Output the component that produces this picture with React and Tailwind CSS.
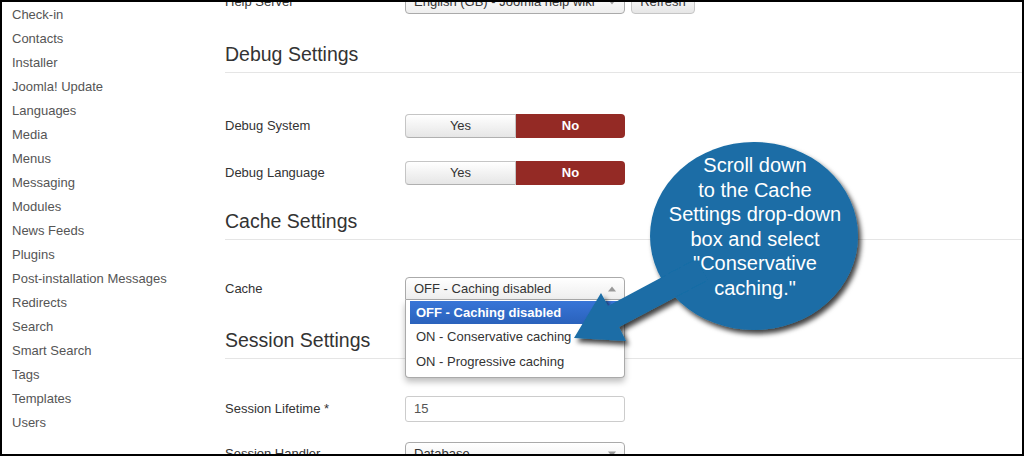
const sidebarItems = [
  'Check-in',
  'Contacts',
  'Installer',
  'Joomla! Update',
  'Languages',
  'Media',
  'Menus',
  'Messaging',
  'Modules',
  'News Feeds',
  'Plugins',
  'Post-installation Messages',
  'Redirects',
  'Search',
  'Smart Search',
  'Tags',
  'Templates',
  'Users',
];

const font = { fontFamily: '"Liberation Sans", Arial, sans-serif' };

const Caret = ({ up = false }) => (
  <svg width="8" height="6" viewBox="0 0 8 6" className="shrink-0">
    <path d={up ? 'M0 5.5 L4 0.5 L8 5.5 Z' : 'M0 0.5 L4 5.5 L8 0.5 Z'} fill="#999" />
  </svg>
);

const Heading = ({ children, className = '' }) => (
  <div className={`shrink-0 flex items-end pb-[6px] border-b border-[#e5e5e5] ${className}`}>
    <h2 className="text-[19.5px] leading-[24px] text-[#333]">{children}</h2>
  </div>
);

const Row = ({ label, children, className = '' }) => (
  <div className={`shrink-0 flex items-center ${className}`}>
    <div className="w-[180px] shrink-0 text-[13px] text-[#333]">{label}</div>
    {children}
  </div>
);

const Toggle = () => (
  <div className="flex w-[220px] h-[24px] text-[13px]">
    <div className="flex-1 flex items-center justify-center rounded-l-[4px] border border-[#c5c5c5] border-b-[#b0b0b0] bg-gradient-to-b from-white to-[#e6e6e6] text-[#333]">
      Yes
    </div>
    <div className="flex-1 flex items-center justify-center rounded-r-[4px] bg-[#942a25] text-white font-bold">
      No
    </div>
  </div>
);

const SelectBox = ({ value, up = false, className = '' }) => (
  <div
    className={`w-[220px] flex items-center justify-between pl-[8px] pr-[8px] border border-[#aaa] bg-gradient-to-b from-white to-[#eee] text-[13px] text-[#333] ${className}`}
  >
    <span>{value}</span>
    <Caret up={up} />
  </div>
);

export default function App() {
  return (
    <div className="relative w-[1024px] h-[456px] bg-white overflow-hidden" style={font}>
      <div className="flex h-full border-2 border-black overflow-hidden">
        {/* Sidebar */}
        <nav className="w-[223px] shrink-0 pt-[1px] pl-[10px]">
          {sidebarItems.map((item) => (
            <div key={item} className="h-[24px] flex items-center text-[13px] text-[#555]">
              {item}
            </div>
          ))}
        </nav>

        {/* Main settings */}
        <main className="flex-1 flex flex-col">
          <Row label="Help Server" className="mt-[-12px] h-[24px]">
            <SelectBox value="English (GB) - Joomla help wiki" className="h-[24px] rounded-[4px] w-[218px]" />
            <div className="ml-[6px] h-[23px] w-[64px] flex items-center justify-center rounded-[4px] border border-[#c5c5c5] bg-gradient-to-b from-white to-[#e6e6e6] text-[13px] text-[#333]">
              Refresh
            </div>
          </Row>

          <Heading className="h-[59px]">Debug Settings</Heading>

          <Row label="Debug System" className="mt-[41px] h-[24px]">
            <Toggle />
          </Row>
          <Row label="Debug Language" className="mt-[23px] h-[24px]">
            <Toggle />
          </Row>

          <Heading className="h-[55px]">Cache Settings</Heading>

          <Row label="Cache" className="mt-[37px] h-[23px]">
            <div className="relative">
              <SelectBox value="OFF - Caching disabled" up className="h-[23px] rounded-t-[4px]" />
              <div className="absolute left-0 top-[23px] z-10 w-[220px] h-[78px] bg-white border border-[#aaa] border-t-0 rounded-b-[4px] shadow-[0_4px_6px_rgba(0,0,0,0.25)] pl-[4px] pr-[2px] pt-[1px] text-[13px] text-[#333]">
                <div className="h-[23px] flex items-center pl-[6px] bg-gradient-to-b from-[#3875d7] to-[#2a62bc] text-white font-bold">
                  OFF - Caching disabled
                </div>
                <div className="h-[25px] flex items-center pl-[6px]">ON - Conservative caching</div>
                <div className="h-[25px] flex items-center pl-[6px]">ON - Progressive caching</div>
              </div>
            </div>
          </Row>

          <Heading className="h-[59px]">Session Settings</Heading>

          <Row label="Session Lifetime *" className="mt-[37px] h-[26px]">
            <div className="w-[220px] h-[26px] flex items-center pl-[8px] border border-[#ccc] rounded-[3px] text-[13px] text-[#555]">
              15
            </div>
          </Row>
          <Row label="Session Handler" className="mt-[20px] h-[24px]">
            <SelectBox value="Database" className="h-[24px] rounded-[4px]" />
          </Row>
        </main>
      </div>

      {/* Callout bubble */}
      <svg className="absolute left-0 top-0 z-20 pointer-events-none" width="1024" height="456">
        <defs>
          <filter id="shadow" x="-20%" y="-20%" width="140%" height="140%">
            <feDropShadow dx="3" dy="4" stdDeviation="2.5" floodColor="#000" floodOpacity="0.75" />
          </filter>
        </defs>
        <g filter="url(#shadow)" fill="#1a6da6">
          <ellipse cx="754" cy="236" rx="104" ry="94" />
          <polygon points="574,338 601,293 608,306 696,259 708,280 619,327 626,341" />
        </g>
      </svg>
      <div className="absolute left-[650px] top-[153px] z-30 w-[210px] text-center text-white text-[20px] leading-[24.6px]">
        Scroll down
        <br />
        to the Cache
        <br />
        Settings drop-down
        <br />
        box and select
        <br />
        "Conservative
        <br />
        caching."
      </div>
    </div>
  );
}
